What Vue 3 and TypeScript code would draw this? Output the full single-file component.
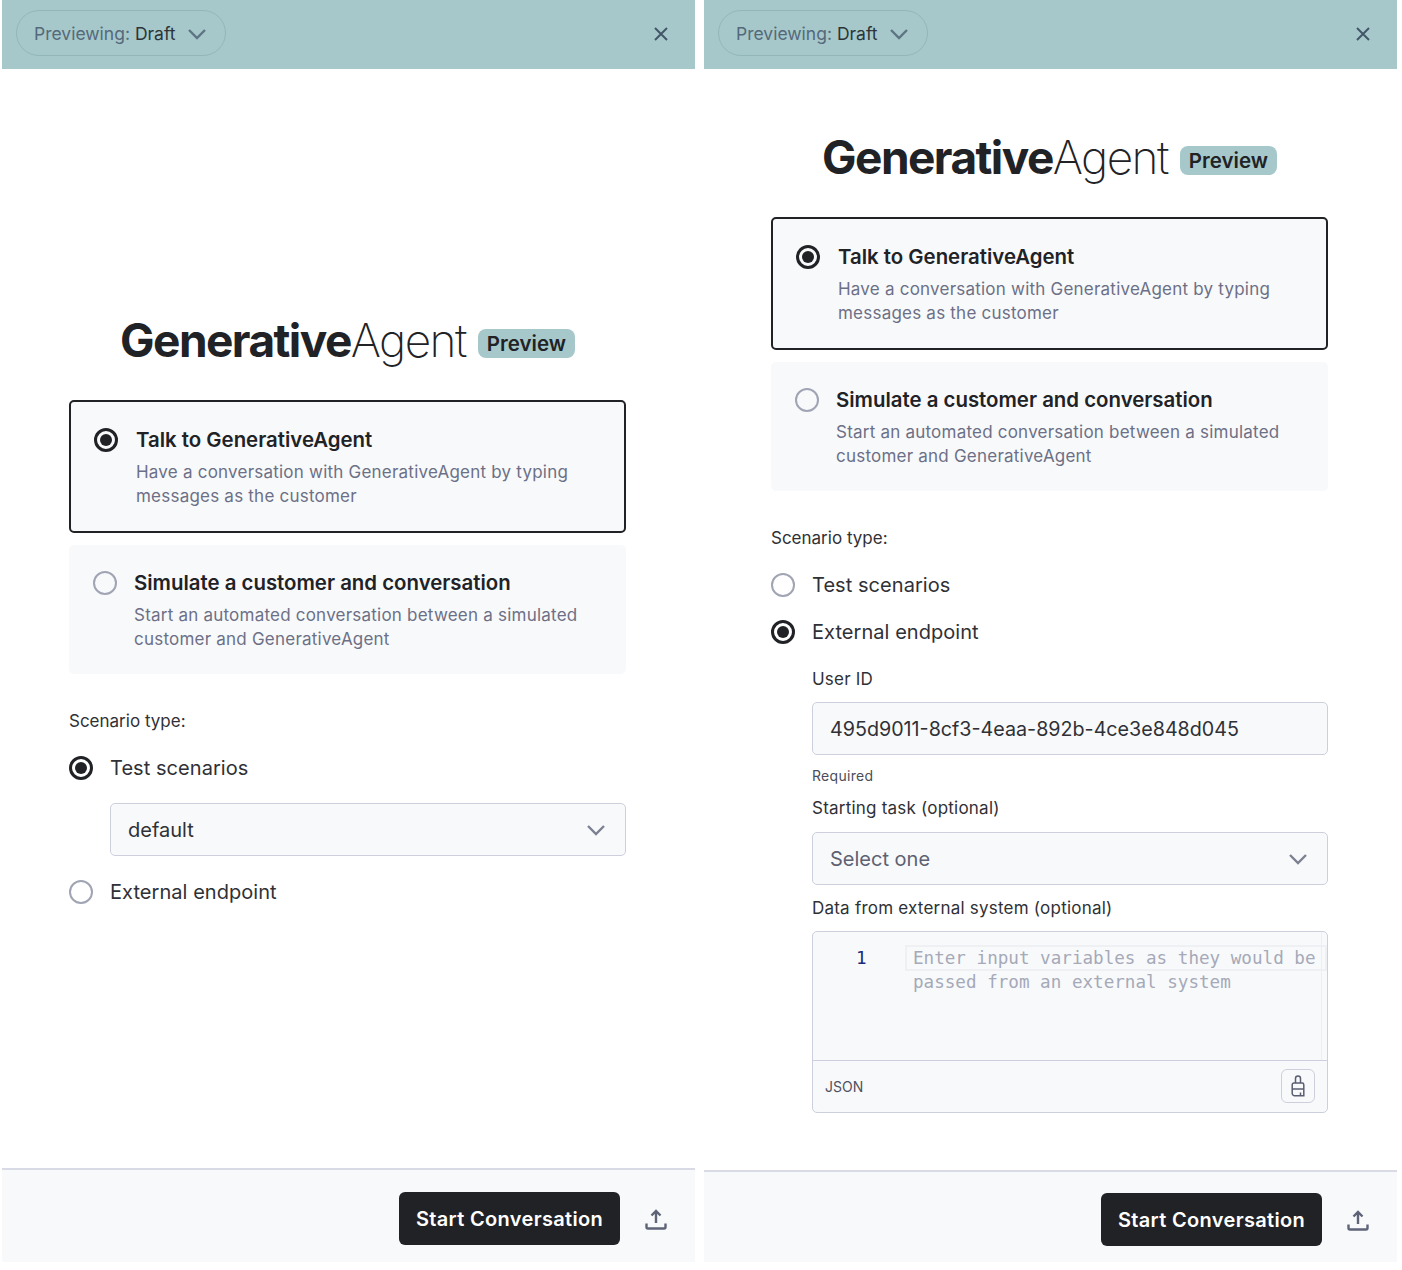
<script setup lang="ts">
interface ModeCard {
  title: string
  lines: string
  selected: boolean
}

const modes: ModeCard[] = [
  {
    title: 'Talk to GenerativeAgent',
    lines: 'Have a conversation with GenerativeAgent by typing messages as the customer',
    selected: true,
  },
  {
    title: 'Simulate a customer and conversation',
    lines: 'Start an automated conversation between a simulated customer and GenerativeAgent',
    selected: false,
  },
]
</script>

<template>
  <div class="screens">
    <section class="panel panel-left">
      <header class="topbar">
        <button type="button" class="pill">
          <span>Previewing: <b>Draft</b></span>
          <svg width="20" height="12" viewBox="0 0 20 12"><path d="M2 2l8 8 8-8" /></svg>
        </button>
        <svg class="close" width="16" height="16" viewBox="0 0 16 16"><path d="M2 2l12 12M14 2L2 14" /></svg>
      </header>

      <main class="body">
        <div class="logo">
          <h1><strong>Generative</strong><span>Agent</span></h1>
          <em>Preview</em>
        </div>
        <div class="modes">
          <div v-for="m in modes" :key="m.title" class="mode" :class="{ active: m.selected }">
            <span class="radio" :class="{ on: m.selected }"></span>
            <div>
              <div class="mode-title">{{ m.title }}</div>
              <p>{{ m.lines }}</p>
            </div>
          </div>
        </div>
        <div class="label scenario">Scenario type:</div>
        <div class="option first"><span class="radio on"></span>Test scenarios</div>
        <div class="nested nested-default">
          <div class="select">
            <span>default</span>
            <svg width="20" height="12" viewBox="0 0 20 12"><path d="M2 2l8 8 8-8" /></svg>
          </div>
        </div>
        <div class="option last"><span class="radio"></span>External endpoint</div>
      </main>

      <footer class="foot">
        <button type="button" class="start">Start Conversation</button>
        <svg class="upload" width="24" height="24" viewBox="0 0 24 24">
          <path d="M12 15V3.500M7.500 7.500L12 3l4.500 4.500M2.500 15.500v3.500a1.500 1.500 0 0 0 1.500 1.500h16a1.500 1.500 0 0 0 1.500-1.500v-3.500" />
        </svg>
      </footer>
    </section>

    <section class="panel panel-right">
      <header class="topbar">
        <button type="button" class="pill">
          <span>Previewing: <b>Draft</b></span>
          <svg width="20" height="12" viewBox="0 0 20 12"><path d="M2 2l8 8 8-8" /></svg>
        </button>
        <svg class="close" width="16" height="16" viewBox="0 0 16 16"><path d="M2 2l12 12M14 2L2 14" /></svg>
      </header>

      <main class="body">
        <div class="logo">
          <h1><strong>Generative</strong><span>Agent</span></h1>
          <em>Preview</em>
        </div>
        <div class="modes">
          <div v-for="m in modes" :key="m.title" class="mode" :class="{ active: m.selected }">
            <span class="radio" :class="{ on: m.selected }"></span>
            <div>
              <div class="mode-title">{{ m.title }}</div>
              <p>{{ m.lines }}</p>
            </div>
          </div>
        </div>
        <div class="label scenario">Scenario type:</div>
        <div class="option first"><span class="radio"></span>Test scenarios</div>
        <div class="option second"><span class="radio on"></span>External endpoint</div>
        <div class="nested">
          <div class="label user">User ID</div>
          <div class="select input">495d9011-8cf3-4eaa-892b-4ce3e848d045</div>
          <div class="hint">Required</div>
          <div class="label task">Starting task (optional)</div>
          <div class="select placeholder">
            <span>Select one</span>
            <svg width="20" height="12" viewBox="0 0 20 12"><path d="M2 2l8 8 8-8" /></svg>
          </div>
          <div class="label data">Data from external system (optional)</div>
          <div class="editor">
            <div class="code">
              <span class="line-no">1</span>
              <div class="code-text">Enter input variables as they would be passed from an external system</div>
              <span class="active-line"></span>
              <span class="scroll-line"></span>
            </div>
            <div class="editor-foot">
              <span>JSON</span>
              <button type="button" class="lock" aria-label="Lock">
                <svg width="14" height="22" viewBox="0 0 14 22">
                  <path d="M4.500 8V3.500a2.500 2.500 0 0 1 5 0V8M1.200 9.700A1.700 1.700 0 0 1 2.900 8h8.200a1.700 1.700 0 0 1 1.700 1.700v11H3.700a2.500 2.500 0 0 1-2.500-2.500zM1.200 14h11.600M9.500 17.500v3.200" />
                </svg>
              </button>
            </div>
          </div>
        </div>
      </main>

      <footer class="foot">
        <button type="button" class="start">Start Conversation</button>
        <svg class="upload" width="24" height="24" viewBox="0 0 24 24">
          <path d="M12 15V3.500M7.500 7.500L12 3l4.500 4.500M2.500 15.500v3.500a1.500 1.500 0 0 0 1.500 1.500h16a1.500 1.500 0 0 0 1.500-1.500v-3.500" />
        </svg>
      </footer>
    </section>
  </div>
</template>

<style>
html,
body {
  background: #fff;
  margin: 0;
}
</style>

<style scoped>
.screens {
  display: flex;
  font-family: Inter, "Liberation Sans", sans-serif;
  gap: 9px;
  height: 1270px;
  padding-left: 2px;
}

.panel {
  display: flex;
  flex-direction: column;
  height: 1262px;
  width: 693px;
}

.topbar {
  align-items: center;
  background: #a6c8ca;
  box-sizing: border-box;
  display: flex;
  flex: none;
  height: 69px;
  justify-content: space-between;
  padding: 0 26px 0 14px;
}

.pill {
  align-items: center;
  background: transparent;
  border: 1.5px solid #93b6ba;
  border-radius: 23px;
  box-sizing: border-box;
  color: #55697a;
  display: flex;
  font-family: inherit;
  font-size: 17.5px;
  height: 46px;
  justify-content: space-between;
  margin-bottom: 4px;
  padding: 2px 18px 0 17px;
  white-space: nowrap;
  width: 210px;
}

.pill b {
  color: #2c3438;
  font-weight: 400;
}

.pill svg path,
.select svg path {
  fill: none;
  stroke: #5f7483;
  stroke-width: 2.4;
}

.close path {
  fill: none;
  stroke: #44566a;
  stroke-width: 2;
}

.close {
  margin-bottom: 1px;
}

.body {
  display: flex;
  flex: 1;
  flex-direction: column;
  padding: 0 69px 0 67px;
}

.panel-left .body {
  padding-top: 250px;
}

.panel-right .body {
  padding-top: 67px;
}

.logo {
  align-items: center;
  display: flex;
  gap: 12px;
  height: 48px;
  justify-content: center;
  margin: 0 0 33px;
}

.logo h1 {
  color: #212226;
  font-size: 46px;
  font-weight: 400;
  letter-spacing: -1.55px;
  line-height: 48px;
  margin: 0;
  padding-bottom: 6px;
}

.logo strong {
  font-weight: 700;
}

.logo h1 span {
  font-weight: 200;
}

.logo em {
  background: #a6c8ca;
  border-radius: 8px;
  color: #212226;
  font-size: 20.5px;
  font-style: normal;
  font-weight: 600;
  line-height: 29px;
  padding: 0 9px;
}

.modes {
  display: flex;
  flex-direction: column;
  gap: 12px;
}

.mode {
  background: #f8f9fb;
  border-radius: 5px;
  box-sizing: border-box;
  display: flex;
  gap: 17px;
  height: 129px;
  padding: 26px 24px 0;
}

.mode.active {
  border: 2px solid #212226;
  gap: 18px;
  height: 133px;
  padding: 26px 23px 0;
}

.radio {
  border: 2.5px solid #a0a4b3;
  border-radius: 50%;
  box-sizing: border-box;
  display: block;
  flex: none;
  height: 24px;
  position: relative;
  width: 24px;
}

.radio.on {
  border: 3px solid #212226;
}

.radio.on::after {
  background: #212226;
  border-radius: 50%;
  content: "";
  inset: 3px;
  position: absolute;
}

.mode-title {
  color: #212226;
  font-size: 20.4px;
  font-weight: 600;
  line-height: 24px;
}

.mode p {
  color: #6c7086;
  font-size: 17px;
  letter-spacing: 0.22px;
  line-height: 24px;
  margin: 8px 0 0;
}

.label {
  color: #2f3136;
  font-size: 17px;
  line-height: 24px;
}

.nested .label {
  letter-spacing: 0.22px;
}

.scenario {
  margin-top: 35px;
}

.option {
  align-items: center;
  color: #2f3136;
  display: flex;
  font-size: 20px;
  gap: 17px;
  height: 24px;
  letter-spacing: 0.05px;
}

.option.first {
  margin-top: 23px;
}

.option.second {
  margin-top: 23px;
}

.option.last {
  margin-top: 24px;
}

.nested {
  padding-left: 41px;
}

.nested-default {
  margin-top: 23px;
}

.select {
  align-items: center;
  background: #f8f9fb;
  border: 1.5px solid #cdd0dc;
  border-radius: 5px;
  box-sizing: border-box;
  color: #2f3136;
  display: flex;
  font-size: 20px;
  height: 53px;
  justify-content: space-between;
  padding: 0 19px 0 17px;
}

.placeholder {
  color: #5d6172;
}

.select svg path {
  stroke: #7c8092;
}

.input {
  font-size: 19.7px;
  margin-top: 11px;
}

.user {
  margin-top: 23px;
}

.hint {
  color: #4a4d59;
  font-size: 14px;
  letter-spacing: 0.3px;
  line-height: 20px;
  margin-top: 11px;
}

.task {
  margin-top: 10px;
}

.task + .select {
  margin-top: 12px;
}

.data {
  margin-top: 11px;
}

.editor {
  background: #f8f9fb;
  border: 1.5px solid #cdd0dc;
  border-radius: 5px;
  box-sizing: border-box;
  height: 182px;
  margin-top: 11px;
}

.code {
  border-bottom: 1.5px solid #cdd0dc;
  box-sizing: border-box;
  display: flex;
  font-family: "DejaVu Sans Mono", monospace;
  font-size: 17.6px;
  height: 129px;
  line-height: 24px;
  padding-top: 14px;
  position: relative;
}

.line-no {
  color: #1a2e78;
  flex: none;
  padding-left: 43px;
  width: 57px;
}

.code-text {
  color: #a5a9b8;
  width: 410px;
}

.active-line {
  border: 2px solid #eff0f3;
  box-sizing: border-box;
  height: 26px;
  left: 92px;
  position: absolute;
  right: 0;
  top: 13px;
}

.scroll-line {
  background: #eceef2;
  bottom: 0;
  position: absolute;
  right: 5px;
  top: 0;
  width: 1.5px;
}

.editor-foot {
  align-items: center;
  color: #4e5160;
  display: flex;
  font-size: 14px;
  height: 50px;
  justify-content: space-between;
  padding: 0 12px;
}

.lock {
  align-items: center;
  background: transparent;
  border: 1.5px solid #cdd0dc;
  border-radius: 6px;
  box-sizing: border-box;
  display: flex;
  height: 34px;
  justify-content: center;
  padding: 0;
  width: 34px;
}

.lock path {
  fill: none;
  stroke: #5a5e70;
  stroke-width: 1.5;
}

.foot {
  align-items: center;
  background: #f8f9fb;
  border-top: 2px solid #d8dbe6;
  box-sizing: border-box;
  display: flex;
  flex: none;
  gap: 24px;
  height: 94px;
  justify-content: flex-end;
  padding: 4px 27px 0 0;
}

.panel-right .foot {
  height: 92px;
}

.start {
  background: #212226;
  border: 0;
  border-radius: 6px;
  color: #fff;
  font-family: inherit;
  font-size: 20px;
  font-weight: 600;
  height: 53px;
  letter-spacing: 0.33px;
  padding: 2px 0 0;
  width: 221px;
}

.upload {
  margin-top: 4px;
}

.upload path {
  fill: none;
  stroke: #5f6378;
  stroke-width: 2.4;
}
</style>
